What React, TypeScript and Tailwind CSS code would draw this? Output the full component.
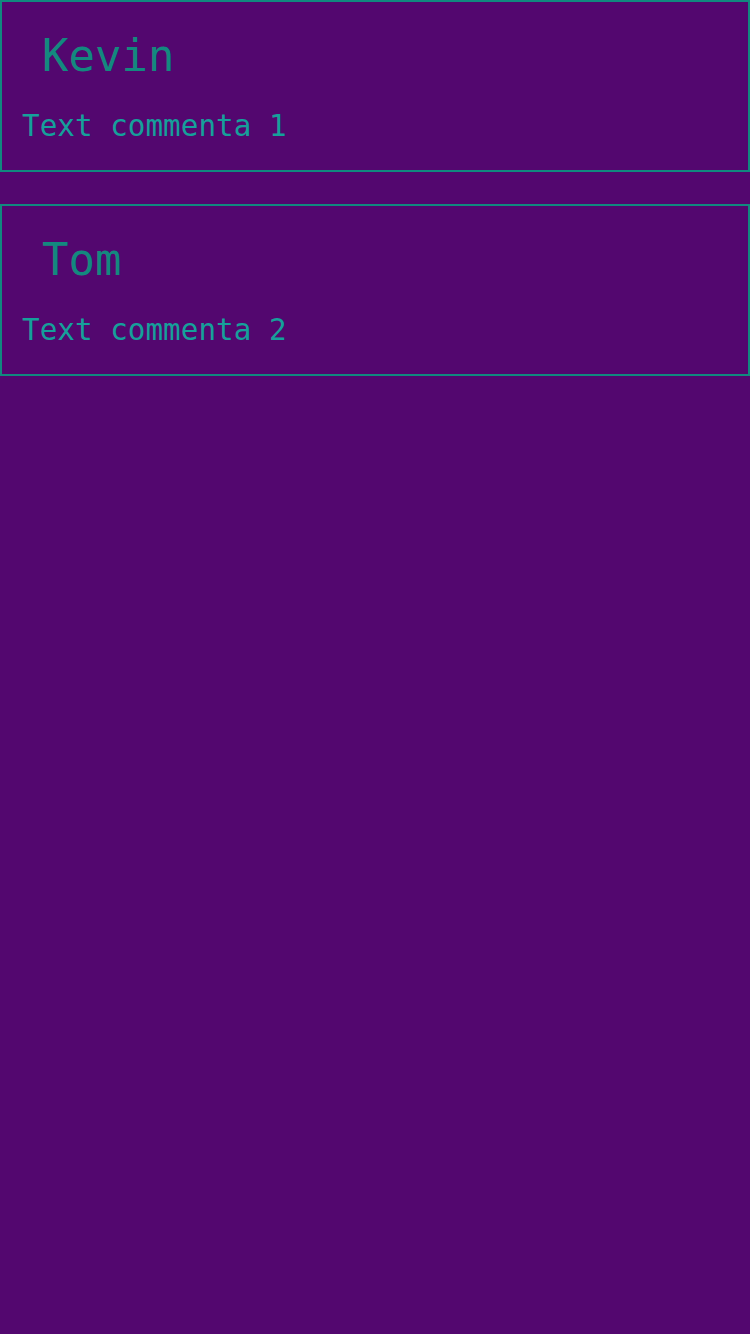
const comments = [
  { name: "Kevin", text: "Text commenta 1" },
  { name: "Tom", text: "Text commenta 2" },
];

export default function App() {
  return (
    <div className="min-h-[1334px] bg-[#53076f] font-['DejaVu_Sans_Mono',monospace]">
      <div className="flex flex-col gap-[32px]">
        {comments.map((c) => (
          <div
            key={c.name}
            className="border-2 border-[#11897f] px-[20px] pt-[28px] pb-[27px]"
          >
            <div className="pl-[20px] text-[44px] leading-[52px] text-[#13897f]">
              {c.name}
            </div>
            <div className="mt-[27px] text-[29.3px] leading-[34px] text-[#15a09b]">
              {c.text}
            </div>
          </div>
        ))}
      </div>
    </div>
  );
}
